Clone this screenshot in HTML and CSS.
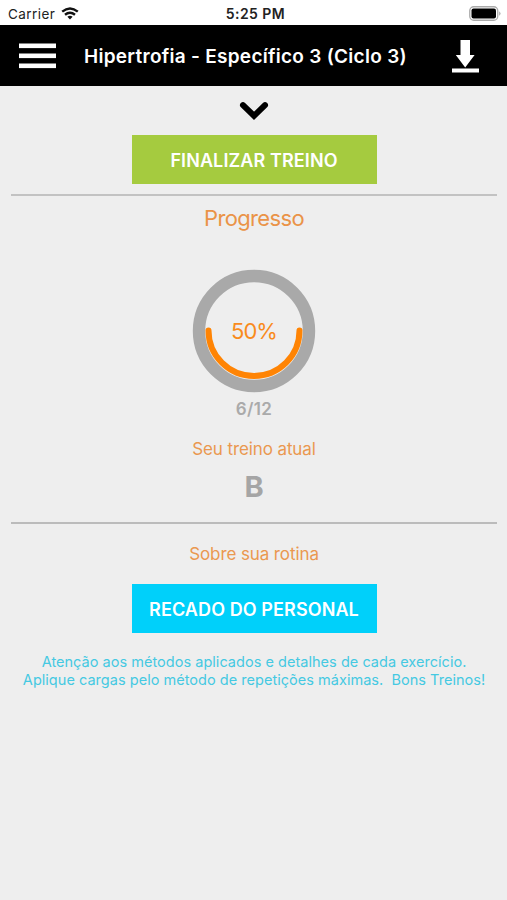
FILE: index.html
```html
<!DOCTYPE html>
<html lang="pt-BR">
<head>
    <meta charset="UTF-8">
    <meta name="viewport" content="width=device-width, initial-scale=1.0">
    <title>Hipertrofia - Específico 3 (Ciclo 3)</title>
    <link rel="stylesheet" href="styles.css">
</head>
<body>
    <div class="status-bar">
        <div class="carrier">
            <span>Carrier</span>
            <svg width="18" height="13" viewBox="0 0 18 13" fill="none" stroke="#111" stroke-width="2.4">
                <path d="M1.2 4.6 Q9 -1.8 16.8 4.6"/>
                <path d="M4 7.7 Q9 3.6 14 7.7"/>
                <path d="M9 12.4 L6.4 9.8 Q9 7.9 11.6 9.8 Z" fill="#111" stroke="none"/>
            </svg>
        </div>
        <div class="time">5:25 PM</div>
        <div class="battery">
            <svg width="32" height="15" viewBox="0 0 32 15">
                <rect x="0.75" y="0.75" width="28" height="13.5" rx="4" fill="#fff" stroke="#aaa" stroke-width="1.3"/>
                <rect x="2.5" y="2.5" width="24.5" height="10" rx="2" fill="#000"/>
                <path d="M30.3 5.2 Q32.6 7.5 30.3 9.8 Z" fill="#999"/>
            </svg>
        </div>
    </div>

    <header class="header">
        <button class="icon-button" aria-label="Menu">
            <svg width="37" height="26" viewBox="0 0 37 26" fill="#fff">
                <rect y="0.5" width="37" height="4.6"/>
                <rect y="10.5" width="37" height="4.6"/>
                <rect y="20.5" width="37" height="4.6"/>
            </svg>
        </button>
        <h1>Hipertrofia - Específico 3 (Ciclo 3)</h1>
        <button class="icon-button download" aria-label="Baixar">
            <svg width="27" height="33" viewBox="0 0 27 33" fill="#fff">
                <path d="M8.5 0 H18 V15 H22.6 L13.2 27.5 L3.8 15 H8.5 Z"/>
                <rect y="28.5" width="27" height="4"/>
            </svg>
        </button>
    </header>

    <main>
        <svg class="chevron" width="30" height="20" viewBox="0 0 30 20" fill="none" stroke="#000" stroke-width="6" stroke-linecap="round">
            <path d="M4 4.2 L15 14.8 L26 4.2"/>
        </svg>
        <button class="button finish">FINALIZAR TREINO</button>

        <section class="progress">
            <h2>Progresso</h2>
            <svg class="ring" width="124" height="124" viewBox="0 0 124 124" fill="none">
                <circle cx="62" cy="62" r="55" stroke="#a9a9a9" stroke-width="12.4"/>
                <path d="M16.5 61.5 A45.5 45.5 0 0 0 107.5 61.5" stroke="#ff8404" stroke-width="6" stroke-linecap="round"/>
                <text class="percent" x="62" y="69.5" text-anchor="middle">50%</text>
            </svg>
            <div class="count">6/12</div>
            <h3>Seu treino atual</h3>
            <div class="workout">B</div>
        </section>

        <section class="routine">
            <h3>Sobre sua rotina</h3>
            <button class="button message">RECADO DO PERSONAL</button>
            <p class="note">
                Atenção aos métodos aplicados e detalhes de cada exercício.<br>
                Aplique cargas pelo método de repetições máximas.&nbsp; Bons Treinos!
            </p>
        </section>
    </main>
</body>
</html>
```
FILE: styles.css
```css
* {
    box-sizing: border-box;
}
body {
    margin: 0;
    min-height: 100vh;
    font-family: Inter, "Liberation Sans", sans-serif;
    text-align: center;
    background-color: #eee;
}
h1, h2, h3, p {
    margin: 0;
}
svg {
    display: block;
}
button {
    padding: 0;
    border: none;
    font-family: inherit;
    cursor: pointer;
}
.status-bar {
    display: grid;
    grid-template-columns: 1fr auto 1fr;
    align-items: center;
    height: 25px;
    padding: 2px 6px 0 8px;
    background-color: #fff;
    color: #222;
    font-size: 13.5px;
}
.carrier {
    display: flex;
    align-items: center;
    gap: 6px;
    letter-spacing: 0.45px;
}
.time {
    padding-left: 2px;
    font-size: 14px;
    font-weight: 600;
    letter-spacing: 0.45px;
}
.battery {
    justify-self: end;
}
.header {
    display: flex;
    align-items: center;
    height: 61px;
    padding: 0 28px 0 19px;
    background-color: #000;
    color: #fff;
}
.header h1 {
    margin-left: 28px;
    padding-top: 1px;
    font-size: 19px;
    font-weight: 600;
    letter-spacing: 0.28px;
    white-space: nowrap;
}
.icon-button {
    background: none;
}
.download {
    margin-left: auto;
    padding-top: 1px;
}
main {
    padding: 15px 10px 0 11px;
}
.chevron {
    margin: 0 auto 14px;
}
.button {
    display: block;
    width: 245px;
    height: 49px;
    margin: 0 auto;
    padding-top: 1px;
    color: #fff;
    font-size: 18px;
    font-weight: 600;
    letter-spacing: 0.1px;
}
.finish {
    background-color: #a5cb3f;
}
.message {
    background-color: #00d0fa;
}
.progress {
    height: 330px;
    margin-top: 10px;
    padding-top: 9px;
    border-top: 2px solid #c2c2c2;
    border-bottom: 2px solid #bbb;
}
.progress h2 {
    line-height: 26px;
    font-size: 22px;
    font-weight: 400;
    letter-spacing: -0.65px;
    color: #ea9347;
}
.ring {
    margin: 38px auto 0;
}
.percent {
    font-size: 22px;
    letter-spacing: -0.9px;
    fill: #f98b1c;
}
.count {
    margin-top: 5px;
    line-height: 22px;
    font-size: 17px;
    font-weight: 600;
    letter-spacing: 0.4px;
    color: #aaa;
}
h3 {
    line-height: 22px;
    font-size: 17px;
    font-weight: 400;
    letter-spacing: -0.1px;
    color: #ea9850;
}
.progress h3 {
    margin-top: 18px;
}
.workout {
    margin-top: 10px;
    line-height: 34px;
    font-size: 29px;
    font-weight: 700;
    color: #a5a5a5;
}
.routine {
    padding-top: 19px;
}
.routine .button {
    margin-top: 19px;
}
.note {
    margin-top: 20px;
    line-height: 17.5px;
    font-size: 14.5px;
    letter-spacing: 0.03px;
    color: #45c9e2;
    white-space: nowrap;
}
```
